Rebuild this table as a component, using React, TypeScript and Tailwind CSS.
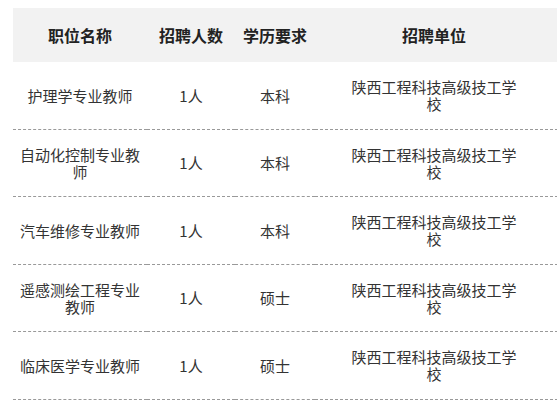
const rows = [
  { name: "护理学专业教师", count: "1人", edu: "本科", unit: "陕西工程科技高级技工学校" },
  { name: "自动化控制专业教师", count: "1人", edu: "本科", unit: "陕西工程科技高级技工学校" },
  { name: "汽车维修专业教师", count: "1人", edu: "本科", unit: "陕西工程科技高级技工学校" },
  { name: "遥感测绘工程专业教师", count: "1人", edu: "硕士", unit: "陕西工程科技高级技工学校" },
  { name: "临床医学专业教师", count: "1人", edu: "硕士", unit: "陕西工程科技高级技工学校" },
];

export default function App() {
  return (
    <div className="w-[557px] h-[404px] overflow-hidden bg-white pt-2 pl-[13px] font-['Noto_Sans_CJK_SC','Microsoft_YaHei',sans-serif] text-[#333]">
      <table className="w-[560px] border-collapse table-fixed text-center">
        <colgroup>
          <col className="w-[134px]" />
          <col className="w-[88px]" />
          <col className="w-[80px]" />
          <col className="w-[258px]" />
        </colgroup>
        <thead>
          <tr className="bg-[#f2f2f2] h-[54px]">
            <th className="text-[16px] font-bold text-[#222]">职位名称</th>
            <th className="text-[16px] font-bold text-[#222]">招聘人数</th>
            <th className="text-[16px] font-bold text-[#222]">学历要求</th>
            <th className="text-[16px] font-bold text-[#222] pr-[20px]">招聘单位</th>
          </tr>
        </thead>
        <tbody>
          {rows.map((r) => (
            <tr key={r.name} className="border-b border-dashed border-[#999]">
              <td className="py-4 px-[6px] text-[15px] leading-[17.25px]">{r.name}</td>
              <td className="py-4 text-[15px] leading-[17.25px]">{r.count}</td>
              <td className="py-4 text-[15px] leading-[17.25px]">{r.edu}</td>
              <td className="py-4 pl-[34px] pr-[54px] text-[15px] leading-[17.25px]">{r.unit}</td>
            </tr>
          ))}
        </tbody>
      </table>
    </div>
  );
}
